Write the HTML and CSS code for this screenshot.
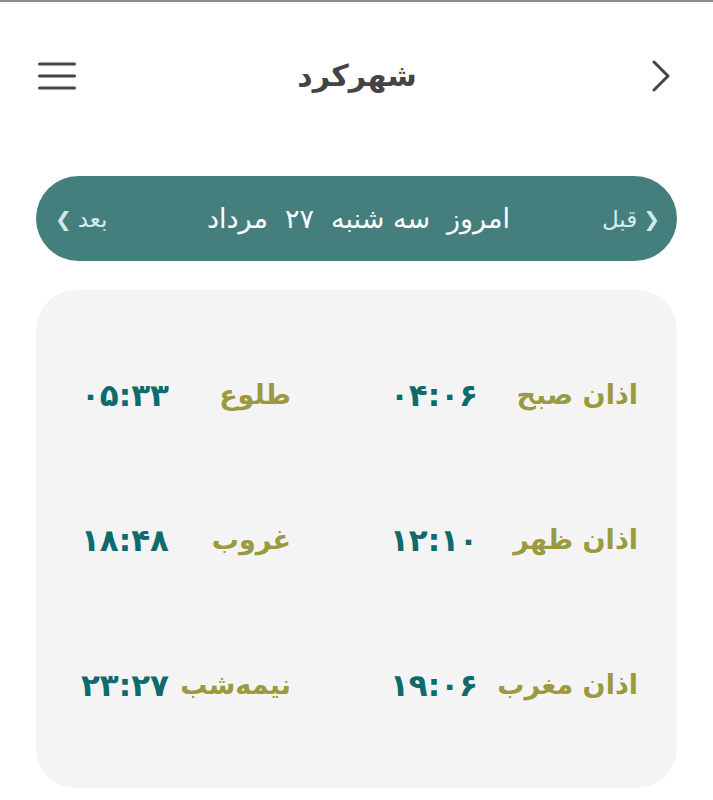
FILE: index.html
```html
<!DOCTYPE html>
<html lang="fa" dir="rtl">
<head>
<meta charset="utf-8">
<title>شهرکرد</title>
<link rel="stylesheet" href="styles.css">
</head>
<body>
<div class="page">
  <header class="topbar">
    <button class="icon-btn back" aria-label="بازگشت">
      <svg width="18" height="32" viewBox="0 0 18 32"><path d="M2 2 L16 16 L2 30" fill="none" stroke="#444" stroke-width="3" stroke-linecap="round" stroke-linejoin="round"/></svg>
    </button>
    <h1 class="title">شهرکرد</h1>
    <button class="icon-btn menu" aria-label="منو">
      <svg width="38" height="28" viewBox="0 0 38 28"><g stroke="#444" stroke-width="3" stroke-linecap="round"><line x1="1.5" y1="2" x2="36.5" y2="2"/><line x1="1.5" y1="14" x2="36.5" y2="14"/><line x1="1.5" y1="26" x2="36.5" y2="26"/></g></svg>
    </button>
  </header>

  <nav class="datebar">
    <span class="nav prev"><span class="arrow">❮</span>قبل</span>
    <span class="today"><span>امروز</span><span>سه شنبه</span><span>۲۷</span><span>مرداد</span></span>
    <span class="nav next">بعد<span class="arrow">❯</span></span>
  </nav>

  <section class="times">
    <div class="label">اذان صبح</div><div class="time">۰۴:۰۶</div>
    <div class="label">طلوع</div><div class="time">۰۵:۳۳</div>
    <div class="label">اذان ظهر</div><div class="time">۱۲:۱۰</div>
    <div class="label">غروب</div><div class="time">۱۸:۴۸</div>
    <div class="label">اذان مغرب</div><div class="time">۱۹:۰۶</div>
    <div class="label">نیمه‌شب</div><div class="time">۲۳:۲۷</div>
  </section>
</div>
</body>
</html>
```
FILE: styles.css
```css
* { box-sizing: border-box; }
html, body { margin: 0; padding: 0; background: #fff; }
body {
  font-family: "DejaVu Sans", "Noto Sans", sans-serif;
  border-top: 2px solid #8c8c8c;
  height: 800px;
  overflow: hidden;
}
.page { padding: 0 36px; }

.topbar {
  height: 148px;
  display: grid;
  grid-template-columns: 1fr auto 1fr;
  align-items: center;
  padding: 0 7px 0 2px;
}
.icon-btn {
  border: 0; background: none; padding: 0; margin: 0;
  display: flex; align-items: center;
}
.back { justify-self: start; }
.menu { justify-self: end; }
.title {
  margin: 0 0 0 6px;
  font-size: 30px;
  font-weight: bold;
  color: #444;
  line-height: 1;
}

.datebar {
  margin-top: 26px;
  height: 85px;
  border-radius: 43px;
  background: #447f7e;
  display: flex;
  align-items: center;
  justify-content: space-between;
  padding: 0 17px 0 19px;
  color: #fff;
}
.nav {
  font-size: 23px;
  color: #d4ecec;
  display: flex;
  align-items: center;
  gap: 6px;
  width: 66px;
}
.next { justify-content: flex-end; }
.arrow { font-size: 20px; font-weight: bold; color: #cfeaea; }
.today {
  display: flex;
  gap: 17px;
  font-size: 27px;
  margin-left: 2px;
}

.times {
  margin-top: 29px;
  height: 498px;
  background: #f4f4f4;
  border-radius: 40px;
  padding: 32px 39px 0 39px;
  display: grid;
  grid-template-columns: 160px 187px 122px 94px;
  grid-auto-rows: 145px;
  align-items: center;
}
.label {
  font-size: 27px;
  font-weight: bold;
  color: #9b9a3f;
}
.time {
  font-size: 31px;
  font-weight: bold;
  color: #0e6a6b;
}
```
